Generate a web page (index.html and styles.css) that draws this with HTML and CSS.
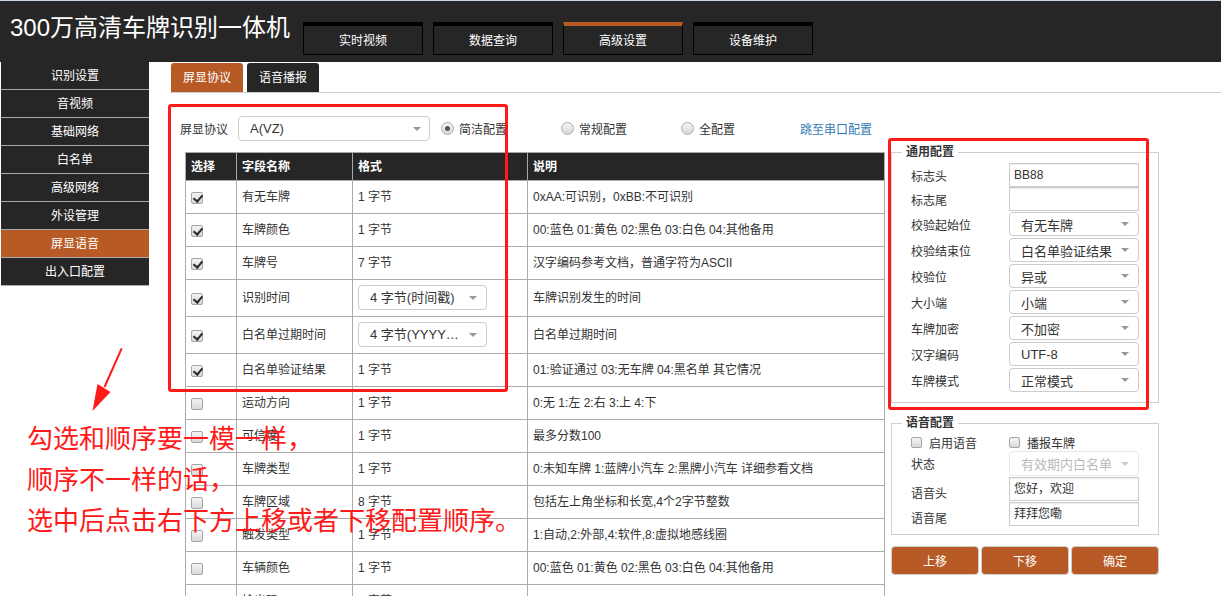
FILE: index.html
```html
<!DOCTYPE html>
<html lang="zh-CN">
<head>
<meta charset="utf-8">
<title>300万高清车牌识别一体机</title>
<link rel="stylesheet" href="styles.css">
</head>
<body>
<header class="topbar">
  <h1 class="brand">300万高清车牌识别一体机</h1>
  <nav class="mainnav">
    <a class="navbtn">实时视频</a>
    <a class="navbtn">数据查询</a>
    <a class="navbtn active">高级设置</a>
    <a class="navbtn">设备维护</a>
  </nav>
</header>
<div class="layout">
  <aside class="sidebar">
    <a class="side-item">识别设置</a>
    <a class="side-item">音视频</a>
    <a class="side-item">基础网络</a>
    <a class="side-item">白名单</a>
    <a class="side-item">高级网络</a>
    <a class="side-item">外设管理</a>
    <a class="side-item active">屏显语音</a>
    <a class="side-item">出入口配置</a>
  </aside>
  <main class="main">
    <div class="tabs">
      <span class="tab active">屏显协议</span>
      <span class="tab">语音播报</span>
    </div>
    <div class="panel">
      <section class="left">
        <div class="proto-row">
          <span class="proto-label">屏显协议</span>
          <div class="select proto-select"><span class="sel-text">A(VZ)</span><i class="caret"></i></div>
          <label class="radio-item"><span class="radio on"></span>简洁配置</label>
          <label class="radio-item"><span class="radio"></span>常规配置</label>
          <label class="radio-item"><span class="radio"></span>全配置</label>
          <a class="link">跳至串口配置</a>
        </div>
        <table class="fields">
          <colgroup><col class="c1"><col class="c2"><col class="c3"><col class="c4"></colgroup>
          <thead>
            <tr><th>选择</th><th>字段名称</th><th>格式</th><th>说明</th></tr>
          </thead>
          <tbody>
            <tr><td><span class="cb on"></span></td><td>有无车牌</td><td>1 字节</td><td>0xAA:可识别，0xBB:不可识别</td></tr>
            <tr><td><span class="cb on"></span></td><td>车牌颜色</td><td>1 字节</td><td>00:蓝色 01:黄色 02:黑色 03:白色 04:其他备用</td></tr>
            <tr><td><span class="cb on"></span></td><td>车牌号</td><td>7 字节</td><td>汉字编码参考文档，普通字符为ASCII</td></tr>
            <tr><td><span class="cb on"></span></td><td>识别时间</td><td class="selcell"><div class="select tsel"><span class="sel-text">4 字节(时间戳)</span><i class="caret"></i></div></td><td>车牌识别发生的时间</td></tr>
            <tr><td><span class="cb on"></span></td><td>白名单过期时间</td><td class="selcell"><div class="select tsel"><span class="sel-text">4 字节(YYYYMMDD)</span><i class="caret"></i></div></td><td>白名单过期时间</td></tr>
            <tr><td><span class="cb on"></span></td><td>白名单验证结果</td><td>1 字节</td><td>01:验证通过 03:无车牌 04:黑名单 其它情况</td></tr>
            <tr><td><span class="cb"></span></td><td>运动方向</td><td>1 字节</td><td>0:无 1:左 2:右 3:上 4:下</td></tr>
            <tr><td><span class="cb"></span></td><td>可信度</td><td>1 字节</td><td>最多分数100</td></tr>
            <tr><td><span class="cb"></span></td><td>车牌类型</td><td>1 字节</td><td>0:未知车牌 1:蓝牌小汽车 2:黑牌小汽车 详细参看文档</td></tr>
            <tr><td><span class="cb"></span></td><td>车牌区域</td><td>8 字节</td><td>包括左上角坐标和长宽,4个2字节整数</td></tr>
            <tr><td><span class="cb"></span></td><td>触发类型</td><td>1 字节</td><td>1:自动,2:外部,4:软件,8:虚拟地感线圈</td></tr>
            <tr><td><span class="cb"></span></td><td>车辆颜色</td><td>1 字节</td><td>00:蓝色 01:黄色 02:黑色 03:白色 04:其他备用</td></tr>
            <tr><td><span class="cb"></span></td><td>检出码</td><td>1 字节</td><td>00:SH 01:SZ 02:GZ 03:BJ</td></tr>
          </tbody>
        </table>
      </section>
      <section class="right">
        <fieldset class="group">
          <legend>通用配置</legend>
          <div class="frow irow"><span class="flabel">标志头</span><div class="input">BB88</div></div>
          <div class="frow irow"><span class="flabel">标志尾</span><div class="input"></div></div>
          <div class="frow srow"><span class="flabel">校验起始位</span><div class="select fsel"><span class="sel-text">有无车牌</span><i class="caret"></i></div></div>
          <div class="frow srow"><span class="flabel">校验结束位</span><div class="select fsel"><span class="sel-text">白名单验证结果</span><i class="caret"></i></div></div>
          <div class="frow srow"><span class="flabel">校验位</span><div class="select fsel"><span class="sel-text">异或</span><i class="caret"></i></div></div>
          <div class="frow srow"><span class="flabel">大小端</span><div class="select fsel"><span class="sel-text">小端</span><i class="caret"></i></div></div>
          <div class="frow srow"><span class="flabel">车牌加密</span><div class="select fsel"><span class="sel-text">不加密</span><i class="caret"></i></div></div>
          <div class="frow srow"><span class="flabel">汉字编码</span><div class="select fsel"><span class="sel-text">UTF-8</span><i class="caret"></i></div></div>
          <div class="frow srow"><span class="flabel">车牌模式</span><div class="select fsel"><span class="sel-text">正常模式</span><i class="caret"></i></div></div>
        </fieldset>
        <fieldset class="group voice">
          <legend>语音配置</legend>
          <div class="frow crow">
            <label class="check-item"><span class="cb small"></span>启用语音</label>
            <label class="check-item"><span class="cb small"></span>播报车牌</label>
          </div>
          <div class="frow vsrow"><span class="flabel">状态</span><div class="select fsel disabled"><span class="sel-text">有效期内白名单</span><i class="caret"></i></div></div>
          <div class="frow virow"><span class="flabel">语音头</span><div class="input">您好，欢迎</div></div>
          <div class="frow virow"><span class="flabel">语音尾</span><div class="input">拜拜您嘞</div></div>
        </fieldset>
        <div class="btns">
          <button class="btn">上移</button>
          <button class="btn">下移</button>
          <button class="btn">确定</button>
        </div>
      </section>
    </div>
  </main>
</div>

<div class="annot-box box-left"></div>
<div class="annot-box box-right"></div>
<svg class="annot-arrow" width="45" height="75" viewBox="0 0 45 75" aria-hidden="true">
  <line x1="36.7" y1="8.3" x2="19.5" y2="47" stroke="#ff1a1a" stroke-width="2"/>
  <polygon points="12.5,44 25.5,52 7.5,71" fill="#ff1a1a"/>
</svg>
<p class="annot-text">勾选和顺序要一模一样，<br>顺序不一样的话，<br>选中后点击右下方上移或者下移配置顺序。</p>
</body>
</html>
```

FILE: styles.css
```css
* { box-sizing: border-box; }
html, body { margin: 0; padding: 0; }
body {
  width: 1221px;
  height: 596px;
  overflow: hidden;
  position: relative;
  background: #fff;
  font-family: "Liberation Sans", "Noto Sans CJK SC", sans-serif;
  font-size: 12px;
  color: #333;
}

/* ---------- top bar ---------- */
.topbar {
  height: 62px;
  background: #262626;
  border-top: 1px solid #c9d6e4;
  display: flex;
  align-items: flex-start;
}
.brand {
  margin: 0;
  width: 303px;
  padding: 13px 0 0 10px;
  font-size: 24px;
  line-height: 28px;
  font-weight: normal;
  color: #fff;
  white-space: nowrap;
}
.mainnav {
  display: flex;
  gap: 10px;
  margin-top: 21px;
}
.navbtn {
  width: 120px;
  height: 33px;
  background: #262626;
  border: 1px solid #000;
  border-top: 4px solid #000;
  color: #fff;
  font-size: 12px;
  line-height: 16px;
  padding-top: 1px;
  display: flex;
  align-items: center;
  justify-content: center;
}
.navbtn.active { border-top-color: #b75a26; }

/* ---------- layout ---------- */
.layout {
  display: flex;
  align-items: flex-start;
}
.sidebar {
  width: 148px;
  margin-left: 1px;
  flex: none;
}
.side-item {
  display: block;
  height: 28px;
  line-height: 28px;
  background: #262626;
  border-bottom: 1px solid #ababab;
  color: #fff;
  text-align: center;
  font-size: 12px;
}
.side-item.active { background: #b75a26; }

.main {
  flex: 1;
  padding-left: 21px;
}
.tabs {
  display: flex;
  gap: 4px;
  height: 31px;
  padding: 1px 0 0 1px;
  border-bottom: 1px solid #cfcfcf;
}
.tab {
  width: 72px;
  height: 29px;
  line-height: 30px;
  text-align: center;
  color: #fff;
  background: #262626;
  border-radius: 3px 3px 0 0;
  font-size: 12px;
}
.tab.active { background: #b75a26; }

.panel {
  display: flex;
  align-items: flex-start;
}

/* ---------- left column ---------- */
.left {
  width: 714px;
  flex: none;
  padding-left: 10px;
}
.proto-row {
  display: flex;
  align-items: center;
  height: 25px;
  margin-top: 23px;
}
.proto-label { width: 58px; }
.radio-item {
  display: flex;
  align-items: center;
  gap: 5px;
  width: 120px;
}
.radio-item:first-of-type { margin-left: 11px; }
.radio {
  width: 13px;
  height: 13px;
  border-radius: 50%;
  border: 1px solid #ababab;
  background: linear-gradient(#f6f6f6, #d6d6d6);
  display: flex;
  align-items: center;
  justify-content: center;
}
.radio.on::before {
  content: "";
  width: 5px;
  height: 5px;
  border-radius: 50%;
  background: #555;
}
.link { color: #337ab7; margin-left: -1px; }

.select {
  display: flex;
  align-items: center;
  height: 25px;
  border: 1px solid #ccc;
  border-radius: 4px;
  background: #fff;
  padding: 0 8px 0 11px;
  font-size: 13px;
  color: #333;
}
.sel-text {
  flex: 1;
  min-width: 0;
  white-space: nowrap;
  overflow: hidden;
  text-overflow: ellipsis;
  margin-right: 3px;
}
.caret {
  width: 0;
  height: 0;
  border-left: 4px solid transparent;
  border-right: 4px solid transparent;
  border-top: 4px solid #999;
  flex: none;
}
.proto-select { width: 192px; }

.fields {
  margin: 11px 0 0 5px;
  width: 699px;
  border-collapse: collapse;
  table-layout: fixed;
}
.fields .c1 { width: 51px; }
.fields .c2 { width: 116px; }
.fields .c3 { width: 175px; }
.fields .c4 { width: 357px; }
.fields th {
  background: #262626;
  color: #fff;
  font-weight: bold;
  text-align: left;
  padding: 6px 5px 5px;
  line-height: 16px;
  border: 1px solid #a9a9a9;
  font-size: 12px;
}
.fields td {
  padding: 8px 5px;
  line-height: 16px;
  border: 1px solid #ababab;
  vertical-align: middle;
  white-space: nowrap;
  overflow: hidden;
}
.fields td.selcell { padding: 5px 5px 6px; }
.tsel { width: 129px; padding-right: 9px; }

.cb {
  display: inline-block;
  position: relative;
  width: 12px;
  height: 12px;
  border: 1px solid #a4a4a4;
  border-radius: 2px;
  background: linear-gradient(#f4f4f4, #d9d9d9);
  vertical-align: middle;
}
.cb.on::after {
  content: "";
  position: absolute;
  left: 3px;
  top: 0px;
  width: 4px;
  height: 7px;
  border: solid #2b2b2b;
  border-width: 0 2px 2px 0;
  transform: rotate(40deg);
}
.cb.small { width: 11px; height: 11px; }

/* ---------- right column ---------- */
.right {
  width: 268px;
  flex: none;
  margin-left: 7px;
  padding-top: 52px;
}
.group {
  margin: 0;
  min-width: 0;
  border: 1px solid #cfcfcf;
  padding: 4px 19px 9px 19px;
}
.group legend {
  margin-left: -9px;
  padding: 0 4px;
  font-weight: bold;
  font-size: 12px;
  line-height: 14px;
  color: #333;
}
.frow {
  display: flex;
  align-items: center;
}
.irow { height: 24px; }
.srow { height: 26px; }
.flabel { width: 98px; flex: none; }
.input {
  width: 130px;
  height: 24px;
  border: 1px solid #ccc;
  box-shadow: inset 0 1px 1px rgba(0,0,0,0.08);
  padding: 0 4px;
  line-height: 22px;
  font-size: 12px;
  color: #333;
}
.fsel { width: 130px; height: 24px; padding-right: 9px; }
.fsel.disabled {
  border-color: #e8e8e8;
  color: #bbb;
}
.fsel.disabled .caret { border-top-color: #ccc; }

.voice { margin-top: 13px; padding-bottom: 8px; }
.crow { height: 17px; }
.check-item {
  display: flex;
  align-items: center;
  gap: 7px;
  width: 98px;
}
.vsrow { height: 25px; }
.vsrow .fsel { height: 25px; }
.virow { height: 25px; align-items: flex-end; }

.btns {
  display: flex;
  gap: 2px;
  margin-top: 11px;
}
.btn {
  width: 88px;
  height: 29px;
  background: #b75a26;
  border: 1px solid #cfcfcf;
  border-radius: 4px;
  color: #fff;
  font-family: inherit;
  font-size: 12px;
  padding: 0;
}

/* ---------- annotations (drawn over the page) ---------- */
.annot-box {
  position: absolute;
  border: 3px solid #ff1a1a;
  border-radius: 3px;
  pointer-events: none;
}
.box-left { left: 168px; top: 104px; width: 340px; height: 288px; }
.box-right { left: 888px; top: 138px; width: 261px; height: 272px; }
.annot-arrow { position: absolute; left: 85px; top: 340px; }
.annot-text {
  position: absolute;
  left: 27px;
  top: 416px;
  margin: 0;
  font-family: "Noto Sans CJK SC", sans-serif;
  font-size: 26px;
  line-height: 41px;
  color: #ff1a1a;
  white-space: nowrap;
}
```
